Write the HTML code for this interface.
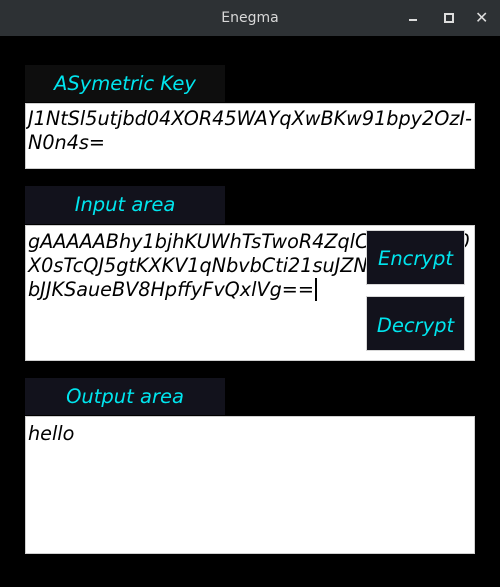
<!DOCTYPE html>
<html><head><style>
body{margin:0;width:500px;height:587px;background:#000;overflow:hidden;font-family:"DejaVu Sans","Liberation Sans",sans-serif;position:relative}
.tb{position:absolute;left:0;top:0;width:500px;height:36px;background:#2d3134;color:#d8d8d8;font-size:14px;text-align:center;line-height:36px}
.lbl{position:absolute;left:25px;width:200px;color:#00e5ee;font-style:oblique;font-size:19.5px;text-align:center}
.box{position:absolute;left:25px;width:448px;background:#fff;border:1px solid #cfcfcf;overflow:hidden;font-style:oblique;font-size:19.2px;line-height:24px;color:#000;white-space:nowrap}
.box div{padding-left:2px}
.btn{position:absolute;left:366px;width:97px;background:#12121c;border:1px solid #d8d8d8;color:#00e5ee;font-style:oblique;font-size:19.5px;text-align:center}
</style></head><body>
<div class="tb">Enegma
<span style="position:absolute;left:409px;top:19px;width:8px;height:2px;background:#ddd"></span>
<span style="position:absolute;left:444px;top:13px;width:6px;height:6px;border:2px solid #ddd"></span>
<span style="position:absolute;left:475px;top:0;font-size:16px;font-weight:bold;color:#ddd">✕</span>
</div>
<div class="lbl" style="top:65px;height:37px;line-height:38px;background:#0e0e0e">ASymetric Key</div>
<div class="box" style="top:103px;height:64px"><div style="padding-top:3px">J1NtSl5utjbd04XOR45WAYqXwBKw91bpy2OzI-</div><div>N0n4s=</div></div>
<div class="lbl" style="top:186px;height:38px;line-height:38px;background:#12121c">Input area</div>
<div class="box" style="top:225px;height:134px"><div style="padding-top:4px">gAAAAABhy1bjhKUWhTsTwoR4ZqlCXqWmNe0</div><div>X0sTcQJ5gtKXKV1qNbvbCti21suJZNXyiW</div><div>bJJKSaueBV8HpffyFvQxlVg==<span style="border-left:2px solid #000;margin-left:1px"></span></div></div>
<div class="btn" style="top:230px;height:53px;line-height:55px">Encrypt</div>
<div class="btn" style="top:296px;height:53px;line-height:57px">Decrypt</div>
<div class="lbl" style="top:378px;height:37px;line-height:38px;background:#12121c">Output area</div>
<div class="box" style="top:416px;height:136px"><div style="padding-top:5px">hello</div></div>
</body></html>
